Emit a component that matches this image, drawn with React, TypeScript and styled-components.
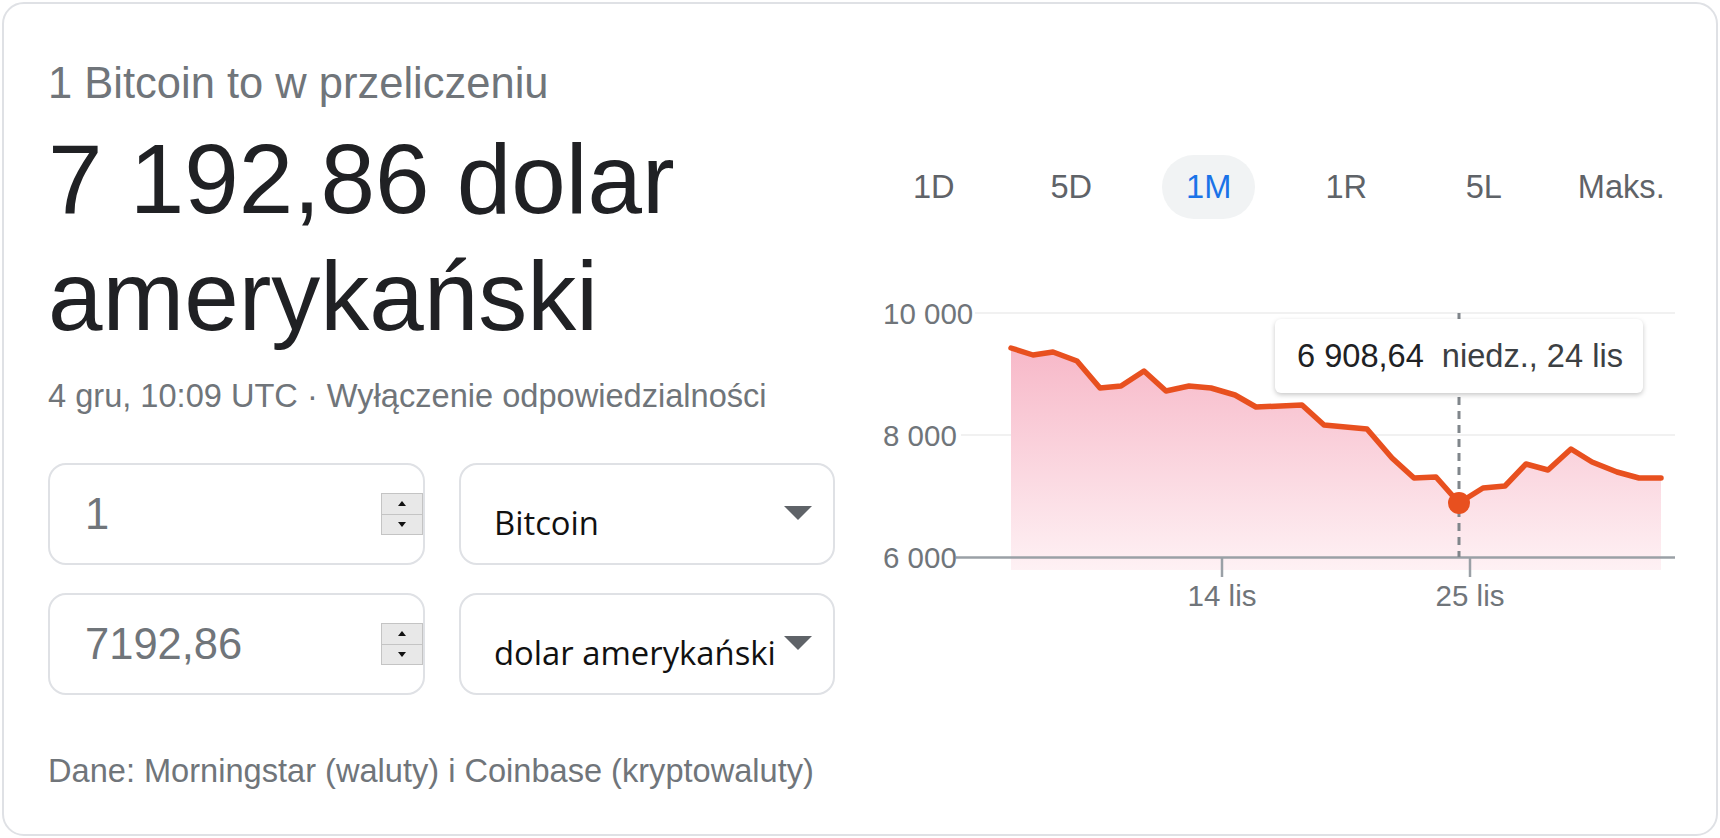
import React from 'react';
import styled, { createGlobalStyle } from 'styled-components';

const GlobalStyle = createGlobalStyle`
  html, body {
    margin: 0;
    padding: 0;
    background: #ffffff;
  }
  body {
    font-family: "Liberation Sans", Arial, sans-serif;
  }
`;

const Card = styled.div`
  box-sizing: border-box;
  margin: 2px;
  width: 1716px;
  height: 834px;
  border: 2px solid #dfe1e5;
  border-radius: 22px;
  padding: 55px 26px 0 44px;
  display: flex;
  gap: 30px;
`;

const LeftColumn = styled.div`
  width: 787px;
  display: flex;
  flex-direction: column;
`;

const Title = styled.div`
  font-size: 43.5px;
  line-height: 48px;
  color: #70757a;
`;

const BigValue = styled.div`
  margin-top: 14px;
  font-size: 98px;
  line-height: 117px;
  color: #202124;
`;

const Meta = styled.div`
  margin-top: 23px;
  font-size: 32.6px;
  line-height: 36px;
  color: #70757a;
  white-space: nowrap;
`;

const ConverterGrid = styled.div`
  margin-top: 49px;
  display: grid;
  grid-template-columns: 377px 376px;
  grid-auto-rows: 102px;
  column-gap: 34px;
  row-gap: 28px;
`;

const Field = styled.div`
  box-sizing: border-box;
  border: 2px solid #dfe1e5;
  border-radius: 18px;
  display: flex;
  align-items: center;
  position: relative;
`;

const NumberField = styled(Field)`
  padding-left: 35px;
`;

const NumberText = styled.div`
  flex: 1;
  font-size: 43.5px;
  color: #70757a;
`;

const Spinner = styled.div`
  box-sizing: border-box;
  width: 42px;
  height: 42px;
  display: flex;
  flex-direction: column;
  border: 1px solid #c4c4c4;
  background: #e8e8e8;
`;

const SpinButton = styled.div<{ up?: boolean }>`
  flex: 1;
  display: flex;
  align-items: center;
  justify-content: center;
  border-top: ${props => props.up ? 'none' : '1px solid #c4c4c4'};
  &::after {
    content: '';
    width: 0;
    height: 0;
    border-left: 4px solid transparent;
    border-right: 4px solid transparent;
    ${props => props.up ? 'border-bottom: 5px solid #111;' : 'border-top: 5px solid #111;'}
  }
`;

const SelectField = styled(Field)`
  padding: 0 21px 0 33px;
`;

const SelectText = styled.div`
  flex: 1;
  margin-top: 16px;
  font-family: "Open Sans", "Noto Sans", sans-serif;
  font-size: 32.8px;
  color: #111111;
  white-space: nowrap;
`;

const SelectArrow = styled.div`
  width: 0;
  height: 0;
  border-left: 14.5px solid transparent;
  border-right: 14.5px solid transparent;
  border-top: 14px solid #5f6368;
  margin-top: -3px;
`;

const Source = styled.div`
  margin-top: 58px;
  font-size: 32.6px;
  line-height: 36px;
  color: #70757a;
  white-space: nowrap;
`;

const RightColumn = styled.div`
  flex: 1;
  display: flex;
  flex-direction: column;
`;

const RangeTabs = styled.div`
  margin-top: 96px;
  display: grid;
  grid-template-columns: repeat(6, 1fr);
  align-items: center;
  justify-items: center;
`;

const RangeTab = styled.div<{ active?: boolean }>`
  height: 64px;
  padding: 0 24px;
  border-radius: 32px;
  display: flex;
  align-items: center;
  font-size: 32.6px;
  color: ${props => props.active ? '#1a73e8' : '#5f6368'};
  background: ${props => props.active ? '#f1f3f4' : 'transparent'};
`;

const ChartBox = styled.div`
  position: relative;
  margin: 76px 0 0 18px;
  width: 792px;
  height: 320px;
`;

const Tooltip = styled.div`
  position: absolute;
  left: 392px;
  top: 24px;
  box-sizing: border-box;
  width: 368px;
  height: 74px;
  padding: 0 22px;
  display: flex;
  align-items: center;
  gap: 18px;
  background: #ffffff;
  border-radius: 6px;
  box-shadow: 0 2px 5px rgba(0, 0, 0, 0.22);
  font-size: 32.6px;
  white-space: nowrap;
`;

const TooltipValue = styled.span`
  color: #202124;
`;

const TooltipDate = styled.span`
  color: #3c4043;
`;

const points: [number, number][] = [
  [128, 53], [150, 60], [170, 57], [194, 66], [217, 93], [238, 91], [261, 76],
  [283, 96], [306, 91], [328, 93], [352, 100], [373, 112], [419, 110], [441, 130],
  [484, 134], [509, 163], [531, 183], [553, 182], [576, 208], [600, 193], [622, 191],
  [643, 169], [665, 175], [688, 154], [709, 167], [734, 177], [756, 183], [778, 183],
];

const tabs = ['1D', '5D', '1M', '1R', '5L', 'Maks.'];

function PriceChart() {
  const line = points.map(([x, y], i) => `${i === 0 ? 'M' : 'L'}${x},${y}`).join(' ');
  const area = `${line} L778,275 L128,275 Z`;

  return (
    <ChartBox>
      <svg width="792" height="320" viewBox="0 0 792 320">
        <defs>
          <linearGradient id="fill" x1="0" y1="0" x2="0" y2="1">
            <stop offset="0" stopColor="#f7b8c8" />
            <stop offset="1" stopColor="#fef1f4" />
          </linearGradient>
        </defs>
        <line x1="92" y1="18" x2="792" y2="18" stroke="#f1f1f1" strokeWidth="2" />
        <line x1="78" y1="140" x2="792" y2="140" stroke="#f1f1f1" strokeWidth="2" />
        <path d={area} fill="url(#fill)" />
        <line x1="73" y1="262.5" x2="792" y2="262.5" stroke="#9aa0a6" strokeWidth="2.5" />
        <line x1="339" y1="262" x2="339" y2="282" stroke="#9aa0a6" strokeWidth="2.5" />
        <line x1="587" y1="262" x2="587" y2="282" stroke="#9aa0a6" strokeWidth="2.5" />
        <g fontFamily="'Liberation Sans', Arial, sans-serif" fontSize="29.5" fill="#70757a">
          <text x="0" y="29">10 000</text>
          <text x="0" y="151">8 000</text>
          <text x="0" y="273">6 000</text>
          <text x="339" y="311" textAnchor="middle">14 lis</text>
          <text x="587" y="311" textAnchor="middle">25 lis</text>
        </g>
        <line x1="576" y1="18" x2="576" y2="262" stroke="#80868b" strokeWidth="3" strokeDasharray="8 6" />
        <path d={line} fill="none" stroke="#e8501f" strokeWidth="5.5" strokeLinejoin="round" strokeLinecap="round" />
        <circle cx="576" cy="208" r="11" fill="#e8501f" />
      </svg>
      <Tooltip>
        <TooltipValue>6 908,64</TooltipValue>
        <TooltipDate>niedz., 24 lis</TooltipDate>
      </Tooltip>
    </ChartBox>
  );
}

function NumberInput({ value }: { value: string }) {
  return (
    <NumberField>
      <NumberText>{value}</NumberText>
      <Spinner>
        <SpinButton up />
        <SpinButton />
      </Spinner>
    </NumberField>
  );
}

function CurrencySelect({ label }: { label: string }) {
  return (
    <SelectField>
      <SelectText>{label}</SelectText>
      <SelectArrow />
    </SelectField>
  );
}

export default function App() {
  return (
    <>
      <GlobalStyle />
      <Card>
        <LeftColumn>
          <Title>1 Bitcoin to w przeliczeniu</Title>
          <BigValue>7 192,86 dolar amerykański</BigValue>
          <Meta>4 gru, 10:09 UTC · Wyłączenie odpowiedzialności</Meta>
          <ConverterGrid>
            <NumberInput value="1" />
            <CurrencySelect label="Bitcoin" />
            <NumberInput value="7192,86" />
            <CurrencySelect label="dolar amerykański" />
          </ConverterGrid>
          <Source>Dane: Morningstar (waluty) i Coinbase (kryptowaluty)</Source>
        </LeftColumn>
        <RightColumn>
          <RangeTabs>
            {tabs.map(tab => (
              <RangeTab key={tab} active={tab === '1M'}>{tab}</RangeTab>
            ))}
          </RangeTabs>
          <PriceChart />
        </RightColumn>
      </Card>
    </>
  );
}
